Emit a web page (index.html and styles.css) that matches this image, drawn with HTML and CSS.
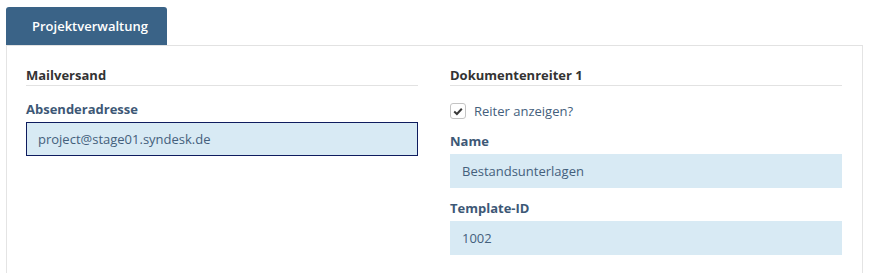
FILE: index.html
```html
<!DOCTYPE html>
<html lang="de">
<head>
    <meta charset="UTF-8">
    <meta name="viewport" content="width=device-width, initial-scale=1.0">
    <title>Projektverwaltung</title>
    <link rel="stylesheet" href="styles.css">
</head>
<body>
    <nav class="tabs">
        <div class="tab active">Projektverwaltung</div>
    </nav>
    <main class="panel">
        <section class="column">
            <h2 class="section-title">Mailversand</h2>
            <div class="form-group">
                <label class="field-label" for="sender">Absenderadresse</label>
                <input type="text" id="sender" class="field-input focused" value="project@stage01.syndesk.de">
            </div>
        </section>
        <section class="column">
            <h2 class="section-title">Dokumentenreiter 1</h2>
            <label class="check-row">
                <span class="checkbox">
                    <svg width="10" height="9" viewBox="0 0 10 9"><path d="M1.2 4.6 L3.9 7 L8.8 1.8" fill="none" stroke="#3a3a3a" stroke-width="2"/></svg>
                </span>
                Reiter anzeigen?
            </label>
            <div class="form-group">
                <label class="field-label" for="tab-name">Name</label>
                <input type="text" id="tab-name" class="field-input" value="Bestandsunterlagen">
            </div>
            <div class="form-group">
                <label class="field-label" for="template-id">Template-ID</label>
                <input type="text" id="template-id" class="field-input" value="1002">
            </div>
        </section>
    </main>
</body>
</html>
```

FILE: styles.css
```css
body {
    font-family: 'Open Sans', 'Liberation Sans', Arial, sans-serif;
    font-size: 13px;
    line-height: 18px;
    margin: 7px 0 0 6px;
    padding: 0;
    background: #fff;
    color: #333;
}
.tabs {
    display: flex;
}
.tab {
    width: 135px;
    height: 38px;
    line-height: 38px;
    padding-left: 26px;
    background: #3a6387;
    color: #fff;
    font-weight: 600;
    border-radius: 3px 3px 0 0;
}
.panel {
    width: 816px;
    display: flex;
    gap: 32px;
    padding: 20px 20px 30px 19px;
    border: 1px solid #e4e4e4;
    border-top-color: #e2e2e2;
}
.column {
    width: 392px;
    display: flex;
    flex-direction: column;
}
.section-title {
    margin: 0 0 14px;
    font-size: 13px;
    font-weight: 700;
    line-height: 18px;
    padding-bottom: 1px;
    border-bottom: 1px solid #e2e2e2;
    color: #333;
}
.form-group {
    display: flex;
    flex-direction: column;
    margin-bottom: 11px;
}
.field-label {
    font-weight: 700;
    color: #3d5876;
    margin-bottom: 4px;
}
.field-input {
    font-family: inherit;
    font-size: 13px;
    height: 34px;
    box-sizing: border-box;
    padding: 0 11px;
    border: 1px solid #d8eaf4;
    background: #d8eaf4;
    color: #44607c;
    outline: none;
    margin: 0;
}
.field-input.focused {
    border-color: #0e1c5e;
}
.check-row {
    display: flex;
    align-items: center;
    gap: 8px;
    color: #44607c;
    margin: 2px 0 12px;
}
.checkbox {
    width: 14px;
    height: 14px;
    border: 1px solid #c4c4c4;
    border-radius: 3px;
    display: flex;
    align-items: center;
    justify-content: center;
    background: #fff;
}
```
